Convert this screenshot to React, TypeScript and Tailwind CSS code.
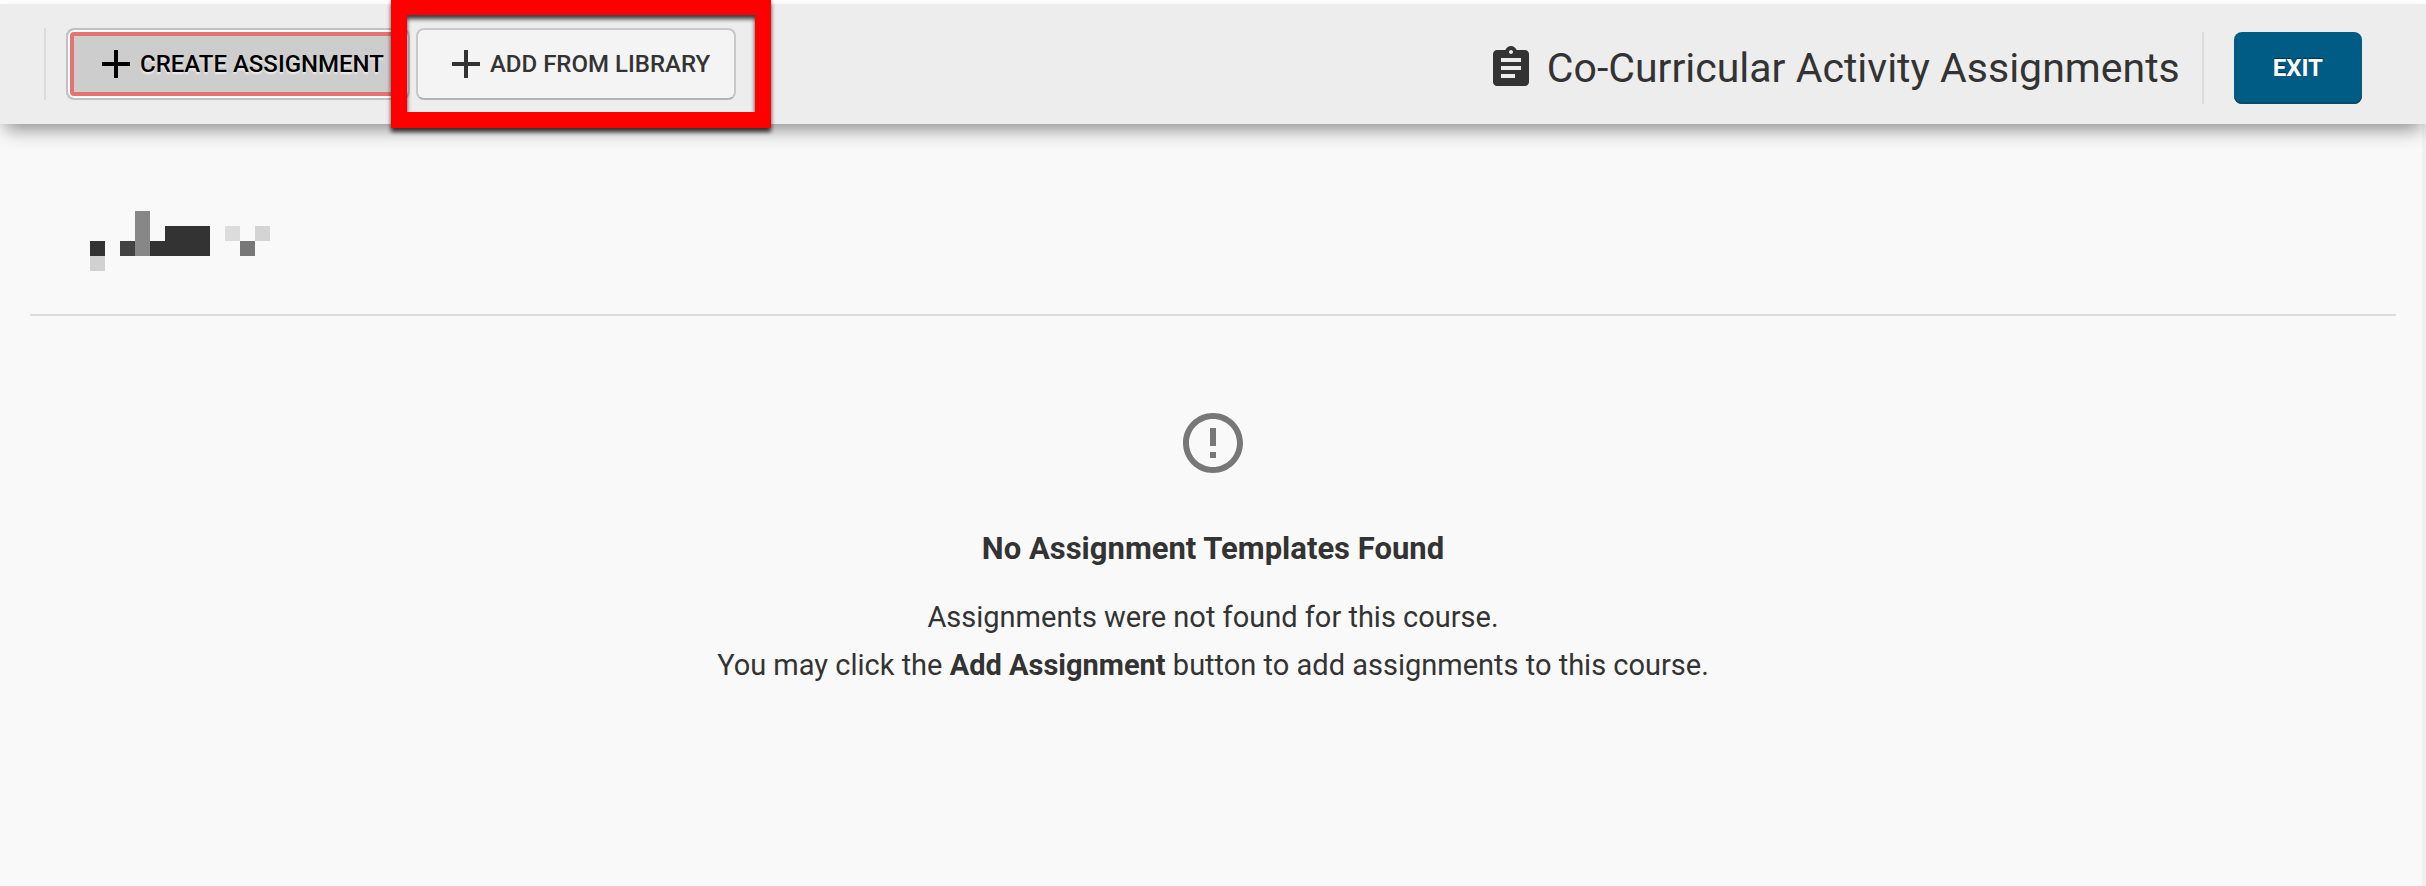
import { ReactNode } from 'react';
import { MdAdd, MdAssignment, MdErrorOutline } from 'react-icons/md';

interface ToolbarButtonProps {
  children: ReactNode;
  active?: boolean;
}

function ToolbarButton({ children, active = false }: ToolbarButtonProps) {
  const look = active
    ? 'bg-[#cdcdcd] text-black border-[#bfc1c3] shadow-[inset_0_0_0_2px_#fff,inset_0_0_0_6px_#e57373] [text-shadow:0_2px_2px_rgba(255,255,255,0.7)]'
    : 'bg-[#f4f4f4] text-[#333] border-[#c8c8c8] border-b-[#b3b3b3]';

  return (
    <button
      type="button"
      className={`flex h-18 items-center whitespace-nowrap rounded-lg border-2 px-6 text-2xl font-medium uppercase ${look}`}
    >
      <MdAdd size={48} aria-hidden="true" />
      {children}
    </button>
  );
}

// Course name, pixelated: [column, row, width, height, fill]
const REDACTED_BLOCKS: Array<[number, number, number, number, string]> = [
  [0, 2, 1, 1, '#333333'],
  [0, 3, 1, 1, '#d1d1d1'],
  [2, 2, 1, 1, '#434343'],
  [3, 0, 1, 3, '#878787'],
  [4, 2, 1, 1, '#333333'],
  [5, 1, 3, 2, '#333333'],
  [9, 1, 1, 1, '#dcdcdc'],
  [10, 2, 1, 1, '#777777'],
  [11, 1, 1, 1, '#d4d4d4'],
];

function RedactedName() {
  return (
    <svg width="180" height="60" viewBox="0 0 12 4" shapeRendering="crispEdges" aria-hidden="true">
      {REDACTED_BLOCKS.map(([x, y, w, h, fill]) => (
        <rect key={`${x}-${y}`} x={x} y={y} width={w} height={h} fill={fill} />
      ))}
    </svg>
  );
}

function Header() {
  return (
    <header className="relative z-10 flex h-30 items-center justify-between bg-[#ededed] pl-11 pr-16 shadow-[0_10px_18px_-5px_rgba(0,0,0,0.45)]">
      <div className="flex items-center">
        <div className="mr-5 h-18 w-0.5 bg-[#dcdcdc]" />
        <div className="flex gap-1.5">
          <ToolbarButton active>Create Assignment</ToolbarButton>
          <div className="relative">
            <ToolbarButton>Add From Library</ToolbarButton>
            <div className="pointer-events-none absolute -bottom-7 -left-[25px] -right-[35px] -top-[29px] border-16 border-[#ff0000] drop-shadow-[0_4px_2px_rgba(0,0,0,0.75)]" />
          </div>
        </div>
      </div>

      <div className="flex items-center pt-2">
        <MdAssignment size={48} aria-hidden="true" />
        <h1 className="ml-3 whitespace-nowrap text-[41px] leading-12">Co-Curricular Activity Assignments</h1>
        <div className="ml-5.5 mr-7.5 h-18 w-0.5 bg-[#dcdcdc]" />
        <button
          type="button"
          className="h-18 rounded-lg bg-[#005c84] px-[39px] text-2xl font-bold uppercase text-white shadow-[inset_0_-2px_0_#0b4a68] [text-shadow:0_-1px_1px_rgba(0,0,0,0.5)]"
        >
          Exit
        </button>
      </div>
    </header>
  );
}

function EmptyState() {
  return (
    <section className="flex flex-col items-center pt-[91px] text-center">
      <MdErrorOutline size={72} className="text-[#777]" aria-hidden="true" />
      <h2 className="mt-11.5 text-[31px] font-bold leading-12">No Assignment Templates Found</h2>
      <p className="mt-5 text-[29px] leading-12">
        Assignments were not found for this course.
        <br />
        You may click the <strong className="font-bold">Add Assignment</strong> button to add assignments to this course.
      </p>
    </section>
  );
}

export default function App() {
  return (
    <div className="flex min-h-screen flex-col border-t-4 border-white bg-[#f9f9f9] font-[Roboto,sans-serif] text-[#333]">
      <Header />
      <main className="grow border-r-4 border-[#f0f0f0] pl-7.5 pr-6.5">
        <div className="border-b-2 border-[#dcdcdc] px-15 pb-[43px] pt-[87px]">
          <RedactedName />
        </div>
        <EmptyState />
      </main>
    </div>
  );
}
